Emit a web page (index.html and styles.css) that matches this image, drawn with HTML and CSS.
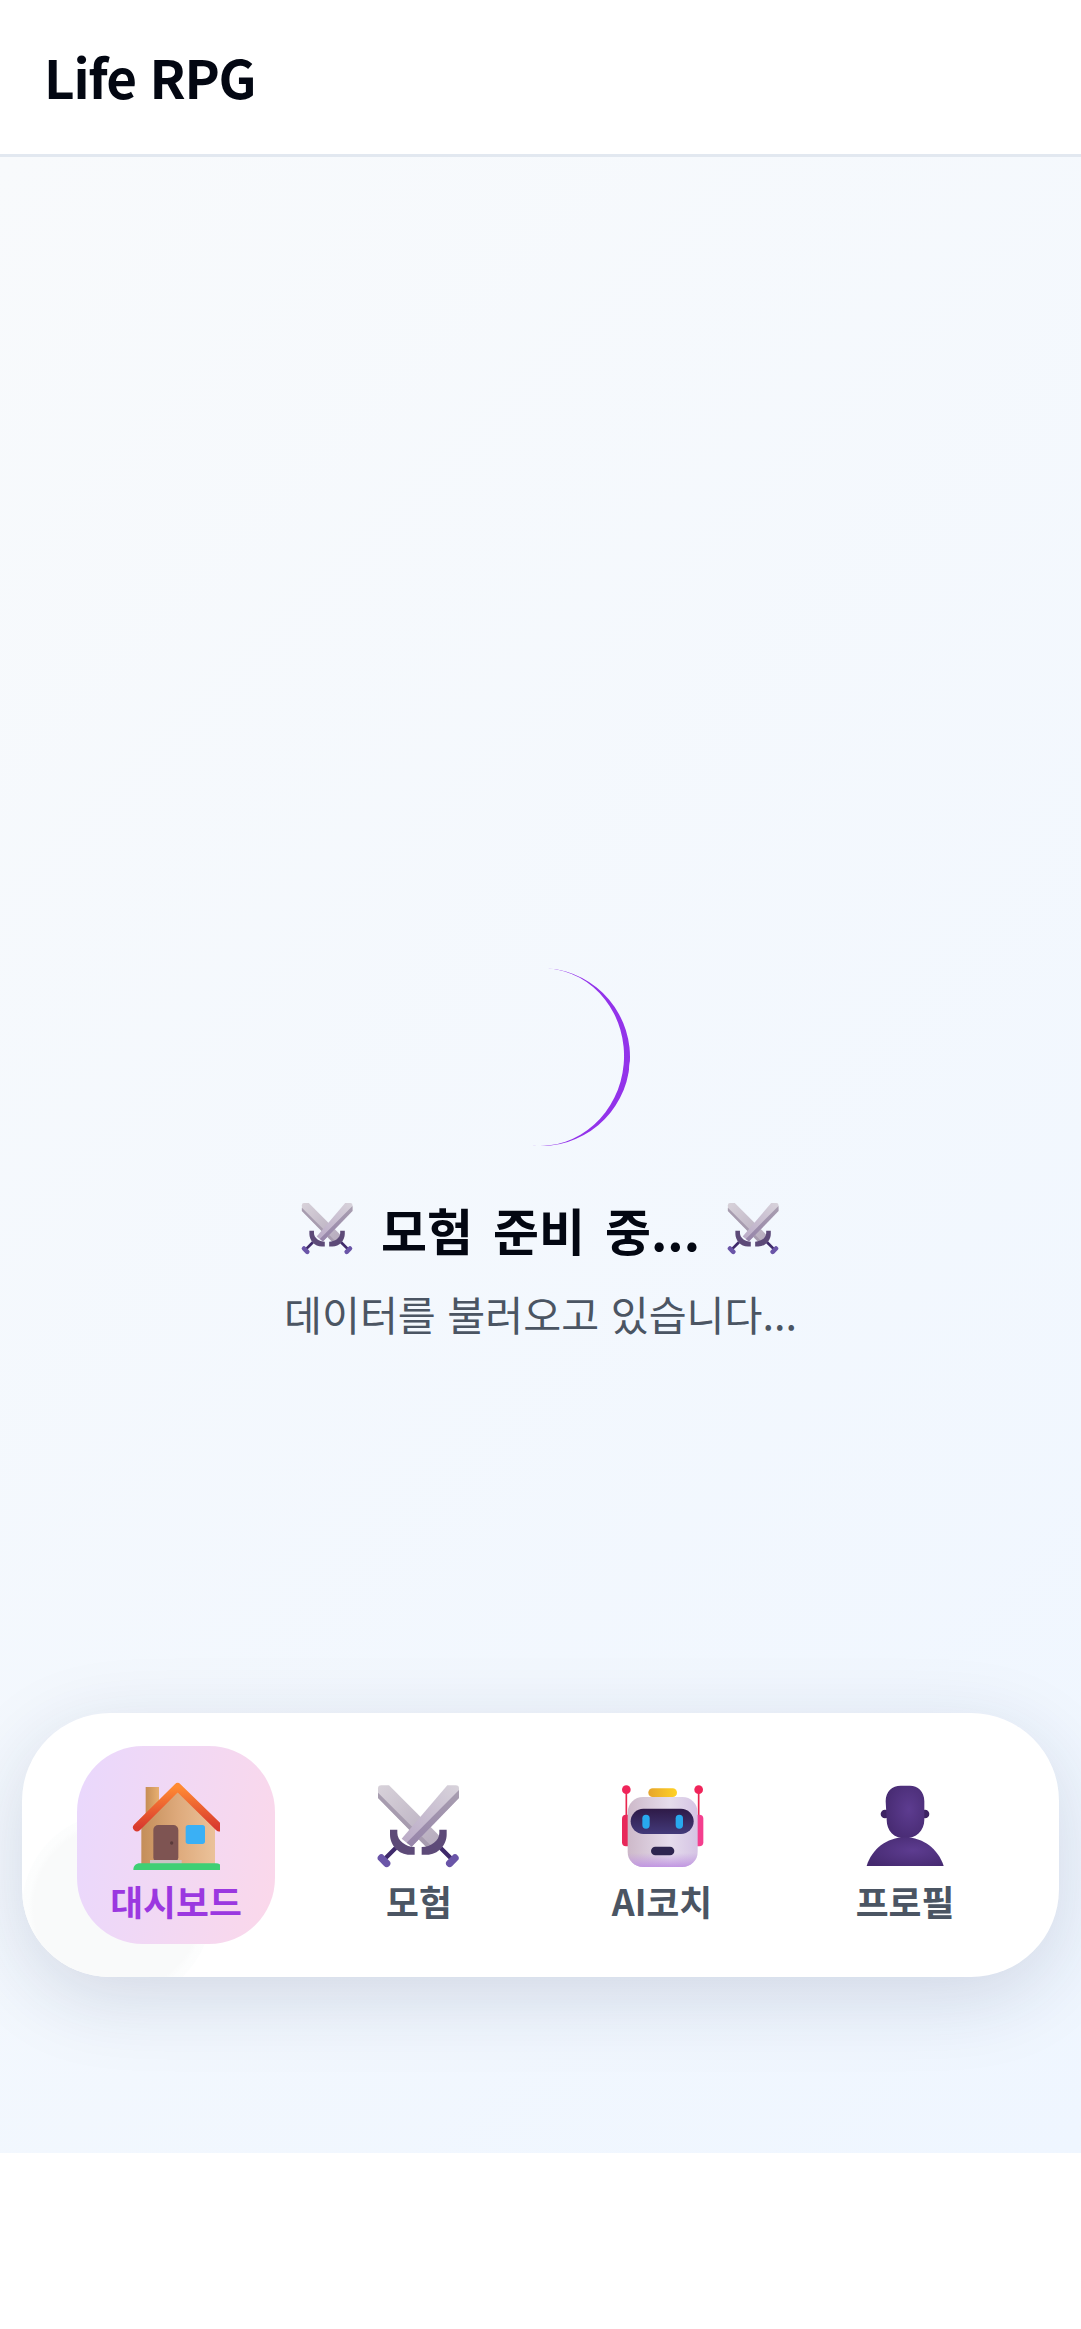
FILE: index.html
```html
<!DOCTYPE html>
<html lang="ko">
<head>
    <meta charset="UTF-8">
    <meta name="viewport" content="width=device-width, initial-scale=1.0">
    <title>Life RPG</title>
    <link rel="stylesheet" href="styles.css">
</head>
<body>
    <svg class="sprite" aria-hidden="true">
        <defs>
            <linearGradient id="bladeBack" x1="0" y1="0" x2="1" y2="1">
                <stop offset="0" stop-color="#d8d2da"/>
                <stop offset="1" stop-color="#b3a8bb"/>
            </linearGradient>
            <linearGradient id="bladeLight" x1="1" y1="0" x2="0" y2="1">
                <stop offset="0" stop-color="#d8d3db"/>
                <stop offset="1" stop-color="#b9a9c6"/>
            </linearGradient>
            <linearGradient id="bladeDark" x1="1" y1="0" x2="0" y2="1">
                <stop offset="0" stop-color="#a89eb0"/>
                <stop offset="1" stop-color="#9684aa"/>
            </linearGradient>
            <linearGradient id="roof" x1="0" y1="0" x2="0" y2="1">
                <stop offset="0" stop-color="#ff8a33"/>
                <stop offset="1" stop-color="#d93a2e"/>
            </linearGradient>
            <linearGradient id="wall" x1="0" y1="0" x2="1" y2="0">
                <stop offset="0" stop-color="#c48e5a"/>
                <stop offset="0.5" stop-color="#deaa7c"/>
                <stop offset="1" stop-color="#ebc29a"/>
            </linearGradient>
            <linearGradient id="chimney" x1="0" y1="0" x2="1" y2="0">
                <stop offset="0" stop-color="#c68d55"/>
                <stop offset="1" stop-color="#e8b070"/>
            </linearGradient>
            <linearGradient id="hat" x1="0" y1="0" x2="1" y2="0">
                <stop offset="0" stop-color="#e6a52c"/>
                <stop offset="1" stop-color="#ffd225"/>
            </linearGradient>
            <linearGradient id="head" x1="0" y1="0" x2="1" y2="0">
                <stop offset="0" stop-color="#cdb9c9"/>
                <stop offset="0.6" stop-color="#e5dcec"/>
                <stop offset="1" stop-color="#d5c4e4"/>
            </linearGradient>
            <linearGradient id="chin" x1="0" y1="0" x2="0" y2="1">
                <stop offset="0.8" stop-color="#c39be0" stop-opacity="0"/>
                <stop offset="1" stop-color="#c196e2"/>
            </linearGradient>
            <linearGradient id="visor" x1="0" y1="0" x2="0" y2="1">
                <stop offset="0" stop-color="#2e1a47"/>
                <stop offset="1" stop-color="#433a7a"/>
            </linearGradient>
            <radialGradient id="purple" cx="0.6" cy="0.45" r="0.7">
                <stop offset="0" stop-color="#5d3c90"/>
                <stop offset="1" stop-color="#45296f"/>
            </radialGradient>
        </defs>
        <symbol id="swords" viewBox="103 92 264 264">
            <path d="M112 112 Q112 102 122 102 H145 L305 262 L268 298 L112 140 Z" fill="url(#bladeBack)"/>
            <path d="M112 124 L278 290 L268 298 L112 140 Z" fill="#a79caf"/>
            <path d="M320 102 H345 Q355 102 355 112 V140 L213 286 L183 262 Z" fill="url(#bladeLight)"/>
            <path d="M355 116 V140 L213 286 L198 274 Z" fill="url(#bladeDark)"/>
            <path d="M165 290 L132 323 M300 290 L333 323" stroke="#3f2a6b" stroke-width="13"/>
            <path d="M122 320 L138 336 M343 320 L327 336" stroke="#6a55a8" stroke-width="22" stroke-linecap="round"/>
            <path d="M148 235 H170 V245 C170 268 195 287 222 287 V310 H208 C173 310 148 280 148 250 Z" fill="#5d4a78"/>
            <path d="M318 235 H296 V245 C296 268 271 287 243 287 V310 H258 C293 310 318 280 318 250 Z" fill="#5d4a78"/>
        </symbol>
    </svg>

    <header class="topbar">
        <h1 class="logo">Life RPG</h1>
    </header>

    <main class="main">
        <div class="loading">
            <div class="spinner"></div>
            <h2 class="loading-title">
                <svg class="title-icon"><use href="#swords"/></svg>
                <span>모험 준비 중...</span>
                <svg class="title-icon"><use href="#swords"/></svg>
            </h2>
            <p class="loading-text">데이터를 불러오고 있습니다...</p>
        </div>

        <nav class="bottom-nav">
            <span class="ripple"></span>
            <a class="nav-item active">
                <svg class="nav-icon" viewBox="396 276 264 264">
                    <rect x="437" y="291" width="40" height="90" fill="url(#chimney)"/>
                    <path d="M424 412 L533 306 L645 412 V522 H424 Z" fill="url(#wall)"/>
                    <path d="M411 412 L533 291 L657 412" fill="none" stroke="url(#roof)" stroke-width="24" stroke-linecap="round" stroke-linejoin="round"/>
                    <rect x="460" y="405" width="75" height="112" rx="15" fill="#7e5452"/>
                    <circle cx="515" cy="459" r="5" fill="#5a3a3a"/>
                    <rect x="450" y="510" width="95" height="12" fill="#c9c2c4"/>
                    <rect x="557" y="405" width="58" height="57" rx="8" fill="#3ab0f5"/>
                    <path d="M400 540 C400 527 408 520 420 520 H648 C660 520 668 527 668 540 Z" fill="#3ecf74"/>
                </svg>
                <span class="nav-label">대시보드</span>
            </a>
            <a class="nav-item">
                <svg class="nav-icon"><use href="#swords"/></svg>
                <span class="nav-label">모험</span>
            </a>
            <a class="nav-item">
                <svg class="nav-icon" viewBox="831 92 264 264">
                    <path d="M856 115 V200 M1073 115 V200" stroke="#e8264f" stroke-width="5"/>
                    <circle cx="856" cy="115" r="13" fill="#f0245a"/>
                    <circle cx="1073" cy="115" r="13" fill="#f0245a"/>
                    <path d="M862 190 H855 Q843 190 843 202 V273 Q843 285 855 285 H862 Z" fill="#e8285a"/>
                    <path d="M1068 190 H1075 Q1087 190 1087 202 V273 Q1087 285 1075 285 H1068 Z" fill="#f43f8e"/>
                    <rect x="922" y="111" width="86" height="26" rx="13" fill="url(#hat)"/>
                    <rect x="860" y="137" width="210" height="210" rx="46" fill="url(#head)"/>
                    <rect x="860" y="137" width="210" height="210" rx="46" fill="url(#chin)"/>
                    <rect x="869" y="172" width="189" height="76" rx="38" fill="url(#visor)"/>
                    <rect x="904" y="190" width="22" height="42" rx="11" fill="#28a9ee"/>
                    <rect x="1004" y="190" width="22" height="42" rx="11" fill="#28a9ee"/>
                    <rect x="930" y="286" width="70" height="26" rx="13" fill="#2e2550"/>
                </svg>
                <span class="nav-label">AI코치</span>
            </a>
            <a class="nav-item">
                <svg class="nav-icon" viewBox="361 272 264 264">
                    <circle cx="433" cy="368" r="13" fill="#3d2363"/>
                    <circle cx="553" cy="368" r="13" fill="#3d2363"/>
                    <path d="M435 330 C435 300 455 283 480 283 H508 C531 283 551 300 551 330 V385 C551 418 526 441 493 441 C460 441 438 418 438 385 Z" fill="url(#purple)"/>
                    <path d="M378 524 C393 474 438 438 493 438 C548 438 593 474 609 524 Z" fill="url(#purple)"/>
                </svg>
                <span class="nav-label">프로필</span>
            </a>
        </nav>
    </main>
</body>
</html>
```

FILE: styles.css
```css
* {
    box-sizing: border-box;
}
body {
    margin: 0;
    min-height: 2329px;
    background: white;
    font-family: "Noto Sans CJK KR", "Noto Sans", sans-serif;
}
.sprite {
    position: absolute;
    width: 0;
    height: 0;
}
.topbar {
    height: 157px;
    padding: 0 44px 2px;
    display: flex;
    align-items: center;
    background: white;
    border-bottom: 3px solid #e2e8f0;
}
.logo {
    margin: 0;
    font-size: 53px;
    font-weight: 700;
    letter-spacing: -1.2px;
    color: #030712;
}
.main {
    position: relative;
    height: 1996px;
    display: flex;
    align-items: center;
    justify-content: center;
    background: linear-gradient(135deg, #f8fafc, #eff6ff);
}
.loading {
    display: flex;
    flex-direction: column;
    align-items: center;
}
.spinner {
    width: 178px;
    height: 178px;
    border-radius: 50%;
    border-right: 6px solid #9333ea;
    transform: rotate(5deg);
    margin-bottom: 47px;
}
.loading-title {
    margin: 0 0 18px;
    display: flex;
    align-items: center;
    gap: 26px;
    font-size: 50px;
    font-weight: 700;
    word-spacing: 6px;
    color: #030712;
}
.title-icon {
    width: 55px;
    height: 55px;
}
.loading-text {
    margin: 0;
    font-size: 41.25px;
    color: #4b5563;
}
.bottom-nav {
    position: absolute;
    left: 22px;
    right: 22px;
    bottom: 176px;
    height: 264px;
    padding: 0 55px;
    display: flex;
    align-items: center;
    justify-content: space-between;
    background: white;
    border-radius: 88px;
    box-shadow: 0 20px 80px rgba(30, 41, 80, 0.15);
    overflow: hidden;
}
.ripple {
    position: absolute;
    left: 0;
    top: 100px;
    width: 190px;
    height: 190px;
    border-radius: 50%;
    background: radial-gradient(circle, #f9fafa 62%, #fcfdfd 66%, rgba(255, 255, 255, 0) 100%);
}
.nav-item {
    position: relative;
    width: 198px;
    height: 198px;
    padding-top: 36px;
    border-radius: 66px;
    display: flex;
    flex-direction: column;
    align-items: center;
}
.nav-item.active {
    background: linear-gradient(100deg, #e9d8fd, #fbd8ea);
}
.nav-icon {
    width: 88px;
    height: 88px;
}
.nav-label {
    margin-top: 8px;
    font-size: 35.75px;
    line-height: 46px;
    font-weight: 700;
    color: #4b5563;
}
.active .nav-label {
    color: #9b38e0;
}
```
